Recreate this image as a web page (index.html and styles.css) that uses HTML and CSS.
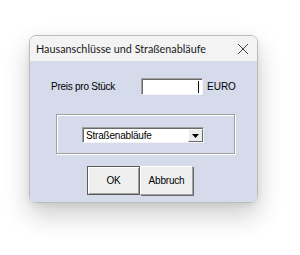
FILE: index.html
```html
<!DOCTYPE html>
<html lang="de">
<head>
  <meta charset="UTF-8">
  <title>Hausanschlüsse und Straßenabläufe</title>
  <link rel="stylesheet" href="styles.css">
</head>
<body>

<div class="dialog">
  <!-- Title bar -->
  <div class="titlebar">
    <span class="title">Hausanschlüsse und Straßenabläufe</span>
    <svg class="close" width="12" height="12" viewBox="0 0 12 12">
      <path d="M1 1 L11 11 M11 1 L1 11" stroke="#444" stroke-width="1" fill="none"/>
    </svg>
  </div>

  <!-- Dialog content -->
  <div class="content">
    <div class="price-row">
      <span class="label">Preis pro Stück</span>
      <div class="textbox"><span class="caret"></span></div>
      <span class="unit">EURO</span>
    </div>

    <div class="frame">
      <div class="combo">
        <span class="combo-text">Straßenabläufe</span>
        <span class="combo-btn">
          <svg width="7" height="4" viewBox="0 0 7 4"><path d="M0 0 H7 L3.5 4 Z" fill="#000"/></svg>
        </span>
      </div>
    </div>

    <div class="buttons">
      <button class="btn default">OK</button>
      <button class="btn">Abbruch</button>
    </div>
  </div>
</div>

</body>
</html>
```

FILE: styles.css
```css
html, body {
  margin: 0;
  height: 100%;
  background-color: #fff;
}

body {
  display: flex;
  align-items: flex-start;
  padding: 35px 0 0 29px;
  box-sizing: border-box;
  font-family: "Liberation Sans", Arial, sans-serif;
  font-size: 10px;
  color: #000;
}

/* Window */
.dialog {
  width: 229px;
  height: 168px;
  box-sizing: border-box;
  border: 1px solid #bcbcbc;
  border-radius: 7px;
  overflow: hidden;
  display: flex;
  flex-direction: column;
  box-shadow: 0 12px 26px rgba(0, 0, 0, 0.2), 0 2px 6px rgba(0, 0, 0, 0.07);
}

.titlebar {
  height: 25px;
  flex: none;
  background-color: #f3f3f3;
  display: flex;
  align-items: center;
  justify-content: space-between;
  padding: 0 8px 0 6px;
}

.title {
  font-family: Lato, "Noto Sans", sans-serif;
  font-size: 10.8px;
  color: #1a1a1a;
}

.close {
  display: block;
}

.content {
  flex: 1;
  background-color: #d6dbeb;
  display: flex;
  flex-direction: column;
  align-items: flex-start;
  padding: 17px 0 0 0;
}

/* First row */
.price-row {
  display: flex;
  align-items: center;
  height: 17px;
  margin-left: 21px;
}

.label {
  width: 90px;
  letter-spacing: -0.25px;
}

.textbox {
  width: 62px;
  height: 17px;
  box-sizing: border-box;
  background-color: #fff;
  border-top: 1px solid #a0a0a0;
  border-left: 1px solid #a0a0a0;
  border-right: 1px solid #f4f4f4;
  border-bottom: 1px solid #f4f4f4;
  box-shadow: inset 1px 1px 0 #696969;
  display: flex;
  justify-content: flex-end;
  align-items: center;
  padding-right: 3px;
}

.caret {
  width: 1px;
  height: 12px;
  background-color: #000;
}

.unit {
  margin-left: 4px;
}

/* Group frame */
.frame {
  margin: 19px 0 0 26px;
  width: 179px;
  height: 40px;
  box-sizing: border-box;
  border: 1px solid #a0a0a0;
  box-shadow: inset 1px 1px 0 #fff, 1px 1px 0 #fff;
  padding: 12px 0 0 25px;
}

.combo {
  width: 122px;
  height: 16px;
  box-sizing: border-box;
  background-color: #fff;
  border-top: 1px solid #a0a0a0;
  border-left: 1px solid #a0a0a0;
  border-right: 1px solid #f4f4f4;
  border-bottom: 1px solid #f4f4f4;
  box-shadow: inset 1px 1px 0 #696969;
  display: flex;
  align-items: stretch;
  padding: 1px 0 0 1px;
}

.combo-text {
  flex: 1;
  padding-left: 2px;
  line-height: 13px;
  letter-spacing: -0.2px;
}

.combo-btn {
  width: 15px;
  box-sizing: border-box;
  background-color: #ececec;
  border-top: 1px solid #fff;
  border-left: 1px solid #fff;
  border-right: 1px solid #696969;
  border-bottom: 1px solid #696969;
  display: flex;
  align-items: center;
  justify-content: center;
}

.combo-btn svg {
  display: block;
}

/* Buttons */
.buttons {
  display: flex;
  margin: 12px 0 0 57px;
}

.btn {
  width: 53px;
  height: 29px;
  box-sizing: border-box;
  margin: 0;
  padding: 0;
  font-family: "Liberation Sans", Arial, sans-serif;
  font-size: 10px;
  color: #000;
  background-color: #efefef;
  border-top: 1px solid #fff;
  border-left: 1px solid #fff;
  border-right: 1px solid #a0a0a0;
  border-bottom: 1px solid #a0a0a0;
  box-shadow: 1px 1px 0 #696969;
  letter-spacing: -0.2px;
}

.btn.default {
  border: 1px solid #5a5a5a;
  box-shadow: inset 1px 1px 0 #fff, inset -1px -1px 0 #a0a0a0;
}
```
